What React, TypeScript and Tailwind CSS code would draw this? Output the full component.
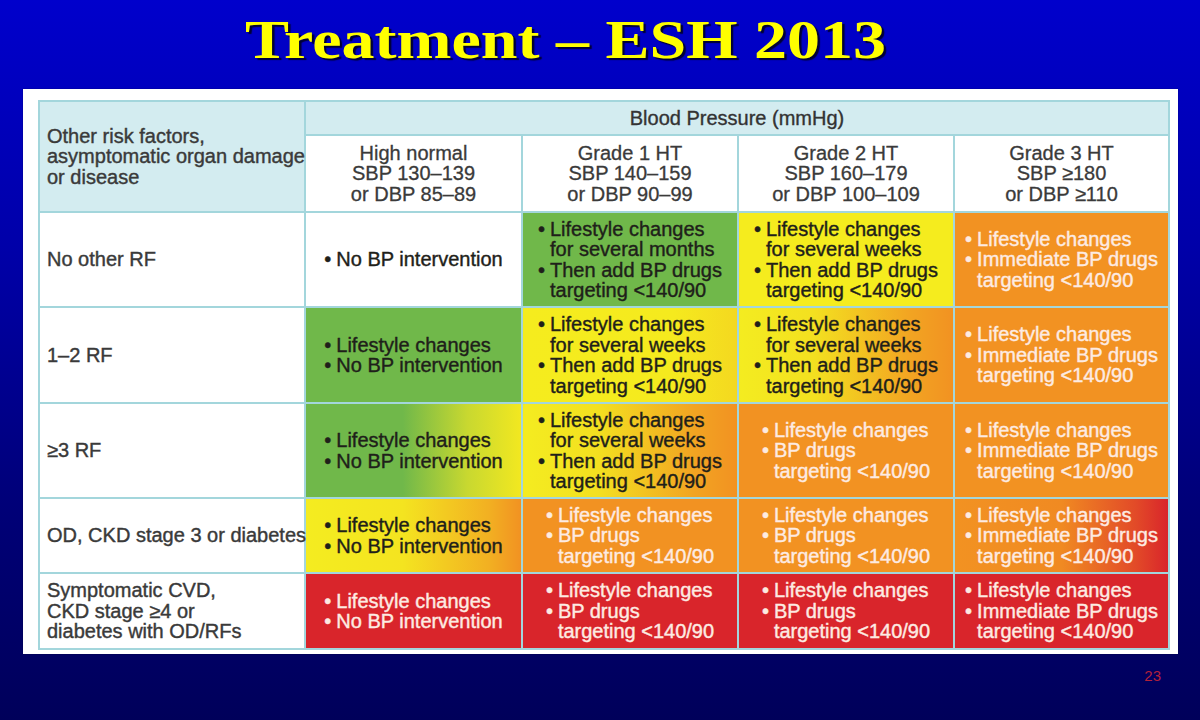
import React from "react";

type Item = string[];
type Cell = { bg: string; light?: boolean; items: Item[] };
type Row = { label: string[]; nowrap?: boolean; cells: Cell[] };

const G = "bg-[#70b84a]";
const Y = "bg-[#f5ec1e]";
const O = "bg-[#f29222]";
const R = "bg-[#d9252b]";

const weeks: Item[] = [
  ["Lifestyle changes", "for several weeks"],
  ["Then add BP drugs", "targeting <140/90"],
];
const immediate: Item[] = [["Lifestyle changes"], ["Immediate BP drugs", "targeting <140/90"]];
const drugs: Item[] = [["Lifestyle changes"], ["BP drugs", "targeting <140/90"]];
const noBP: Item[] = [["Lifestyle changes"], ["No BP intervention"]];

const rows: Row[] = [
  {
    label: ["No other RF"],
    cells: [
      { bg: "bg-white", items: [["No BP intervention"]] },
      {
        bg: G,
        items: [
          ["Lifestyle changes", "for several months"],
          ["Then add BP drugs", "targeting <140/90"],
        ],
      },
      { bg: Y, items: weeks },
      { bg: O, light: true, items: immediate },
    ],
  },
  {
    label: ["1–2 RF"],
    cells: [
      { bg: G, items: noBP },
      { bg: "bg-[linear-gradient(to_right,#f5ec1e_0%,#f5ea1e_70%,#f4d820_100%)]", items: weeks },
      { bg: "bg-[linear-gradient(to_right,#f4ec20_0%,#f3e020_35%,#f2a422_80%,#f29222_100%)]", items: weeks },
      { bg: O, light: true, items: immediate },
    ],
  },
  {
    label: ["≥3 RF"],
    cells: [
      { bg: "bg-[linear-gradient(to_right,#70b84a_0%,#70b84a_45%,#c8d830_75%,#f2e820_100%)]", items: noBP },
      { bg: "bg-[linear-gradient(to_right,#f4ec20_0%,#f3e020_35%,#f2a422_80%,#f29222_100%)]", items: weeks },
      { bg: O, light: true, items: drugs },
      { bg: O, light: true, items: immediate },
    ],
  },
  {
    label: ["OD, CKD stage 3 or diabetes"],
    nowrap: true,
    cells: [
      { bg: "bg-[linear-gradient(to_right,#f4ec20_0%,#f4e420_45%,#f2b022_85%,#f29222_100%)]", items: noBP },
      { bg: O, light: true, items: drugs },
      { bg: O, light: true, items: drugs },
      { bg: "bg-[linear-gradient(to_right,#f29222_0%,#f08a22_50%,#e24a28_85%,#d9252b_100%)]", light: true, items: immediate },
    ],
  },
  {
    label: ["Symptomatic CVD,", "CKD stage ≥4 or", "diabetes with OD/RFs"],
    cells: [
      { bg: R, light: true, items: noBP },
      { bg: R, light: true, items: drugs },
      { bg: R, light: true, items: drugs },
      { bg: R, light: true, items: immediate },
    ],
  },
];

const rowHeights = [
  "h-[93px]",
  "h-[94px]",
  "h-[93px]",
  "h-[73px]",
  "h-[74px]",
];

function CellBody({ cell }: { cell: Cell }) {
  return (
    <div
      className={`${cell.light ? "text-[#fdebe2]" : "text-[#1f1f1a]"} text-[20px] leading-[20.5px] [-webkit-text-stroke:0.4px_currentColor] whitespace-nowrap`}
    >
      {cell.items.map((item, i) => (
        <div key={i}>
          {item.map((line, j) => (
            <div key={j} className={j === 0 ? "" : "pl-[12px]"}>
              {j === 0 ? <span className="inline-block w-[12px]">•</span> : null}
              {line}
            </div>
          ))}
        </div>
      ))}
    </div>
  );
}

export default function App() {
  return (
    <div className="w-[1200px] h-[720px] overflow-hidden flex flex-col bg-[linear-gradient(to_bottom,#0000cc_0%,#0000a8_35%,#000078_70%,#00005a_100%)] font-['Liberation_Sans',Arial,sans-serif]">
      <div className="h-[89px] pt-[12px] pl-[245px]">
        <h1 className="inline-block origin-left scale-x-[1.2] text-[55px] leading-none font-bold text-[#ffff00] font-['Liberation_Serif','Times_New_Roman',serif] whitespace-nowrap [text-shadow:2px_2px_1px_rgba(0,0,0,0.75)]">
          Treatment – ESH 2013
        </h1>
      </div>

      <div className="ml-[23px] w-[1155px] h-[565px] bg-white pt-[11px] pl-[15px] shadow-[0_0_1px_rgba(0,0,0,0.5)]">
        <div className="w-[1132px] p-[2px] bg-[#a3d6dc] grid grid-cols-[264px_215px_214px_214px_213px] gap-[2px]">
          <div className="row-span-2 bg-[#d3ecf0] flex items-center pl-[7px] text-[#3a3a3a] text-[20px] leading-[20.5px] [-webkit-text-stroke:0.4px_currentColor] whitespace-nowrap">
            <div>
              <div>Other risk factors,</div>
              <div>asymptomatic organ damage</div>
              <div>or disease</div>
            </div>
          </div>
          <div className="col-span-4 h-[32px] bg-[#d3ecf0] flex items-center justify-center text-[#333333] text-[20px] [-webkit-text-stroke:0.35px_currentColor]">
            Blood Pressure (mmHg)
          </div>
          {[
            ["High normal", "SBP 130–139", "or DBP 85–89"],
            ["Grade 1 HT", "SBP 140–159", "or DBP 90–99"],
            ["Grade 2 HT", "SBP 160–179", "or DBP 100–109"],
            ["Grade 3 HT", "SBP ≥180", "or DBP ≥110"],
          ].map((h, i) => (
            <div
              key={i}
              className="h-[75px] bg-white flex flex-col items-center justify-center text-[#3a3a3a] text-[20px] leading-[20.5px] [-webkit-text-stroke:0.3px_currentColor]"
            >
              {h.map((l, j) => (
                <div key={j}>{l}</div>
              ))}
            </div>
          ))}

          {rows.map((row, ri) => (
            <React.Fragment key={ri}>
              <div
                className={`${rowHeights[ri]} bg-white flex items-center pl-[7px] text-[#3a3a3a] text-[20px] leading-[20.5px] [-webkit-text-stroke:0.4px_currentColor] ${row.nowrap ? "whitespace-nowrap relative z-10" : ""}`}
              >
                <div>
                  {row.label.map((l, j) => (
                    <div key={j}>{l}</div>
                  ))}
                </div>
              </div>
              {row.cells.map((cell, ci) => (
                <div
                  key={ci}
                  className={`${rowHeights[ri]} ${cell.bg} flex items-center justify-center`}
                >
                  <CellBody cell={cell} />
                </div>
              ))}
            </React.Fragment>
          ))}
        </div>
      </div>

      <div className="flex-1 flex justify-end pr-[39px] pt-[14px]">
        <span className="text-[15px] leading-none text-[#b3203a]">23</span>
      </div>
    </div>
  );
}
